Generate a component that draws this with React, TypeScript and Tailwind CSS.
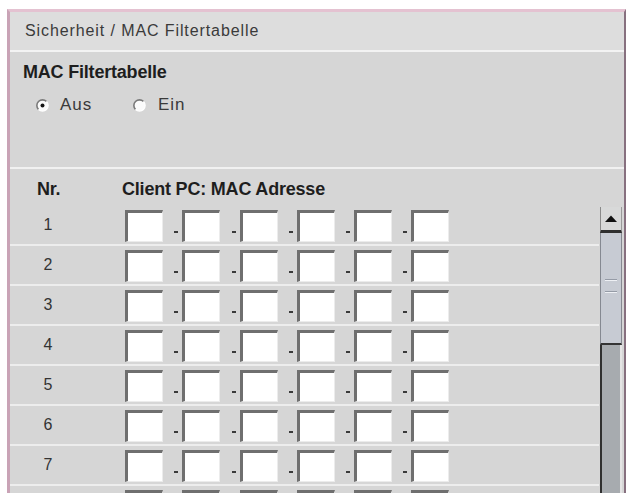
import React from "react";

const ROWS = [1, 2, 3, 4, 5, 6, 7, 8];
const DASH_WIDTHS = ["w-[19px]", "w-[20px]", "w-[19px]", "w-[19px]", "w-[19px]"];

function Radio({ checked }: { checked: boolean }) {
  return (
    <svg width="13" height="13" viewBox="0 0 13 13" className="shrink-0">
      <circle cx="6.5" cy="6.5" r="5.6" fill="#fbfbfb" />
      <path d="M2.5 10.5 A5.6 5.6 0 0 1 10.5 2.5" fill="none" stroke="#7a7a7a" strokeWidth="1.6" />
      <path d="M10.5 2.5 A5.6 5.6 0 0 1 2.5 10.5" fill="none" stroke="#ffffff" strokeWidth="1.2" />
      {checked && <circle cx="6.5" cy="6.5" r="2" fill="#151515" />}
    </svg>
  );
}

function OctetField() {
  return (
    <div className="h-[32px] w-[38px] shrink-0 border-l-[3px] border-t-[3px] border-r border-b border-l-[#6f6f6f] border-t-[#6f6f6f] border-r-[#ececec] border-b-[#ececec] bg-white" />
  );
}

function Dash({ width }: { width: string }) {
  return (
    <div className={`${width} h-[32px] shrink-0 flex items-end justify-end pr-[4px] pb-[9px]`}>
      <span className="block h-[2px] w-[4px] bg-[#3a3a3a]" />
    </div>
  );
}

function MacRow({ n }: { n: number }) {
  return (
    <div className="h-[40px] flex items-start border-b-2 border-[#ededed]">
      <div className="w-[76px] h-[38px] flex items-center justify-center text-[16px] text-[#333]">{n}</div>
      <div className="flex pl-[39px] pt-[4px]">
        {[0, 1, 2, 3, 4, 5].map((i) => (
          <React.Fragment key={i}>
            {i > 0 && <Dash width={DASH_WIDTHS[i - 1]} />}
            <OctetField />
          </React.Fragment>
        ))}
      </div>
    </div>
  );
}

function ScrollBar() {
  return (
    <div className="w-[22px] mt-[1px] ml-[1px] flex flex-col shrink-0">
      <div className="h-[26px] shrink-0 bg-[#d8d9d9] border-l border-l-[#8a8a8a] border-r border-r-[#9a9a9a] border-b-[3px] border-b-[#2f2f2f] flex items-center justify-center">
        <svg width="12" height="7" viewBox="0 0 12 7">
          <polygon points="0,7 6,0.5 12,7" fill="#111" />
        </svg>
      </div>
      <div className="h-[112px] shrink-0 bg-[#c7cbd3] border-l border-r border-[#858991] border-b-2 border-b-[#343434] flex flex-col items-center pt-[46px]">
        <span className="block h-[1px] w-[12px] bg-[#959ba6]" />
        <span className="block h-[1px] w-[12px] bg-[#eef0f4]" />
        <span className="block h-[10px]" />
        <span className="block h-[1px] w-[12px] bg-[#959ba6]" />
        <span className="block h-[1px] w-[12px] bg-[#eef0f4]" />
      </div>
      <div className="flex-1 bg-[#a7abaf] border-l-2 border-l-[#303030] border-r-2 border-r-[#e4e4e4]" />
    </div>
  );
}

export default function App() {
  return (
    <div
      className="h-[493px] w-[629px] overflow-hidden bg-white pt-[9px] pl-[7px]"
      style={{ fontFamily: '"Liberation Sans", Arial, sans-serif' }}
    >
      <div className="w-[619px] h-[520px] flex flex-col border-l-[3px] border-l-[#c9a3b6] border-t-[3px] border-t-[#e4c2d1] border-r-2 border-r-[#87707f] bg-[#d6d6d6]">
        {/* breadcrumb bar */}
        <div className="h-[38px] shrink-0 flex items-center pl-[15px] bg-[#dddddd] text-[16px] tracking-[0.9px] text-[#3a3a3a]">
          Sicherheit / MAC Filtertabelle
        </div>
        <div className="h-[2px] shrink-0 bg-[#f3f3f3]" />

        {/* on/off switch for the filter */}
        <div className="h-[115px] shrink-0 pl-[13px] pt-[10px]">
          <div className="h-[20px] leading-[20px] text-[18px] font-bold tracking-[-0.2px] text-[#1e1e1e]">
            MAC Filtertabelle
          </div>
          <div className="mt-[13px] ml-[13px] flex items-center h-[20px] text-[17px] tracking-[1px] text-[#3a3a3a]">
            <label className="w-[97px] flex items-center gap-[11px]">
              <Radio checked />
              <span>Aus</span>
            </label>
            <label className="flex items-center gap-[12px]">
              <Radio checked={false} />
              <span>Ein</span>
            </label>
          </div>
        </div>
        <div className="h-[2px] shrink-0 bg-[#f1f1f1]" />

        {/* table header */}
        <div className="h-[37px] shrink-0 flex pt-[10px] text-[18px] leading-[20px] font-bold tracking-[-0.2px] text-[#1e1e1e]">
          <div className="w-[112px] pl-[27px]">Nr.</div>
          <div>Client PC: MAC Adresse</div>
        </div>

        {/* address rows with scroll bar */}
        <div className="flex flex-1 pr-[2px]">
          <div className="flex-1 flex flex-col">
            {ROWS.map((n) => (
              <MacRow key={n} n={n} />
            ))}
          </div>
          <ScrollBar />
        </div>
      </div>
    </div>
  );
}
